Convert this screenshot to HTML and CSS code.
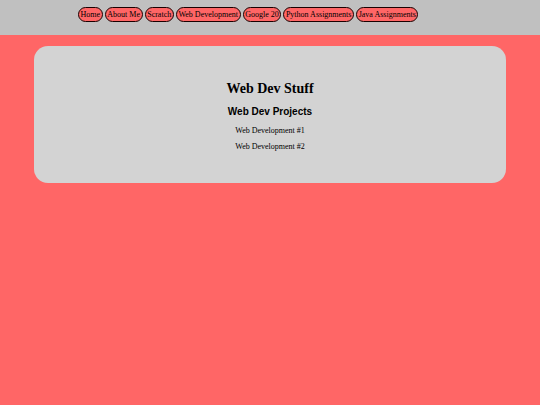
FILE: index.html
```html
<!DOCTYPE html>
<html>
<head>
<meta charset="utf-8">
<link rel="stylesheet" href="styles.css">
</head>
<body>
<header class="topbar">
  <nav class="nav">
    <a class="nav-btn" href="#">Home</a>
    <a class="nav-btn" href="#">About Me</a>
    <a class="nav-btn" href="#">Scratch</a>
    <a class="nav-btn" href="#">Web Development</a>
    <a class="nav-btn" href="#">Google 20</a>
    <a class="nav-btn" href="#">Python Assignments</a>
    <a class="nav-btn" href="#">Java Assignments</a>
  </nav>
</header>
<main class="card">
  <h1 class="title">Web Dev Stuff</h1>
  <h2 class="subtitle">Web Dev Projects</h2>
  <p class="item">Web Development #1</p>
  <p class="item">Web Development #2</p>
</main>
</body>
</html>
```
FILE: styles.css
```css
html, body {
  margin: 0;
  padding: 0;
}
body {
  background: #ff6666;
  font-family: "Liberation Serif", serif;
  color: #000;
}
.topbar {
  background: #c0c0c0;
  height: 35px;
  box-sizing: border-box;
  padding: 7px 0 0 78px;
}
.nav {
  display: flex;
  gap: 2px;
}
.nav-btn {
  display: block;
  background: #ff6666;
  border: 1px solid #1a0000;
  border-radius: 8px;
  color: #000;
  text-decoration: none;
  font-size: 8px;
  line-height: 13px;
  padding: 0 1.6px;
}
.card {
  margin: 11px 34px 0;
  height: 137px;
  box-sizing: border-box;
  background: #d3d3d3;
  border-radius: 14px;
  text-align: center;
  padding-top: 35px;
}
.title {
  margin: 0;
  font-size: 14px;
  line-height: 15px;
  font-weight: bold;
}
.subtitle {
  margin: 10px 0 0;
  font-family: "Liberation Sans", sans-serif;
  font-size: 10px;
  line-height: 12px;
  font-weight: bold;
}
.item {
  margin: 5px 0 0;
  font-size: 8px;
  line-height: 11px;
}
.subtitle + .item {
  margin-top: 7px;
}
```
